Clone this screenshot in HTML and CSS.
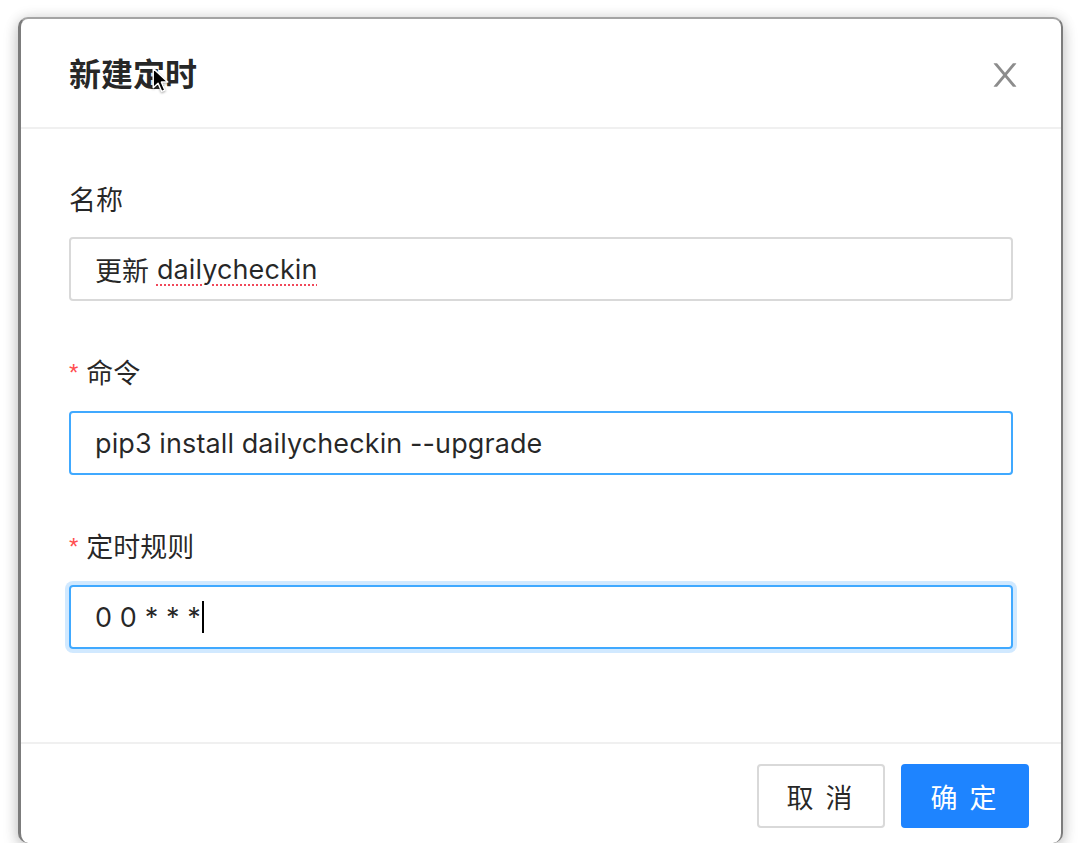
FILE: index.html
```html
<!DOCTYPE html>
<html lang="zh-CN">
<head>
<meta charset="utf-8">
<title>新建定时</title>
<link rel="stylesheet" href="styles.css">
</head>
<body>
<div class="page">
  <div class="modal">
    <div class="modal-header">
      <div class="modal-title">新建定时</div>
      <button class="modal-close" aria-label="关闭">
        <svg viewBox="64 64 896 896" width="32" height="32" fill="currentColor"><path d="M563.8 512l262.5-312.9c4.4-5.2.7-13.1-6.1-13.1h-79.8c-4.7 0-9.2 2.1-12.3 5.7L511.6 449.8 295.1 191.7c-3-3.6-7.5-5.7-12.3-5.7H203c-6.8 0-10.5 7.9-6.1 13.1L459.4 512 196.9 824.9A7.95 7.95 0 00203 838h79.8c4.7 0 9.2-2.1 12.3-5.7l216.5-258.1 216.5 258.1c3 3.6 7.5 5.7 12.3 5.7h79.8c6.8 0 10.5-7.9 6.1-13.1L563.8 512z"/></svg>
      </button>
      <svg class="mouse" viewBox="0 0 14 22" width="17" height="27"><path d="M1 1 L1 17 L5 13.2 L8 20 L10.6 18.9 L7.7 12.3 L13 12.3 Z" fill="#000" stroke="#fff" stroke-width="1.2" stroke-linejoin="round"/></svg>
    </div>
    <div class="modal-body">
      <div class="form-item">
        <div class="label">名称</div>
        <div class="input"><span>更新 </span><span class="spell">dailycheckin</span></div>
      </div>
      <div class="form-item">
        <div class="label"><span class="req">*</span>命令</div>
        <div class="input hover">pip3 install dailycheckin --upgrade</div>
      </div>
      <div class="form-item last">
        <div class="label"><span class="req">*</span>定时规则</div>
        <div class="input focus">0 0 * * *<span class="caret"></span></div>
      </div>
    </div>
    <div class="modal-footer">
      <button class="btn">取 消</button>
      <button class="btn primary">确 定</button>
    </div>
  </div>
</div>
</body>
</html>
```

FILE: styles.css
```css
html, body {
  margin: 0;
  background: #fff;
}
body {
  font-family: Inter, "Noto Sans CJK SC", sans-serif;
  color: rgba(0, 0, 0, 0.85);
}
.page {
  padding: 17px 0 0 18px;
}
.modal {
  width: 1040px;
  background: #fff;
  border-left: 3px solid #7c7c7c;
  border-right: 2px solid #7c7c7c;
  border-top: 2px solid #a4a4a4;
  border-radius: 10px;
  box-shadow: 0 6px 16px rgba(0, 0, 0, 0.18), 0 0 14px rgba(0, 0, 0, 0.12);
  position: relative;
}
.modal-header {
  height: 108px;
  padding: 0 48px;
  display: flex;
  align-items: center;
  border-bottom: 2px solid #f0f0f0;
  position: relative;
}
.modal-title {
  font-family: "Noto Sans CJK SC", sans-serif;
  font-size: 32px;
  font-weight: 700;
  line-height: 44px;
  color: rgba(0, 0, 0, 0.85);
  margin-top: -2px;
}
.modal-close {
  position: absolute;
  top: 0;
  right: 0;
  width: 112px;
  height: 112px;
  border: 0;
  background: transparent;
  padding: 0;
  display: flex;
  align-items: center;
  justify-content: center;
  color: rgba(0, 0, 0, 0.45);
}
.mouse {
  position: absolute;
  left: 131px;
  top: 48px;
  filter: drop-shadow(0 1px 1px rgba(0,0,0,.35));
}
.modal-body {
  padding: 48px;
}
.form-item {
  margin-bottom: 48px;
}
.form-item.last {
  margin-bottom: 45px;
}
.label {
  font-size: 27px;
  line-height: 44px;
  margin-bottom: 16px;
  display: flex;
  align-items: center;
  font-family: "Noto Sans CJK SC", sans-serif;
}
.req {
  color: #ff4d4f;
  font-family: "Liberation Sans", sans-serif;
  font-size: 24px;
  margin-right: 8px;
  margin-top: 2px;
}
.input {
  height: 64px;
  box-sizing: border-box;
  border: 2px solid #d9d9d9;
  border-radius: 4px;
  padding: 0 22px 0 24px;
  display: flex;
  align-items: center;
  font-size: 27px;
  letter-spacing: 0.1px;
  color: rgba(0, 0, 0, 0.85);
  white-space: pre;
}
.spell {
  text-decoration: underline dotted #f0485a;
  text-decoration-thickness: 2px;
  text-underline-offset: 6px;
}
.input.hover {
  border-color: #40a9ff;
}
.input.focus {
  border-color: #40a9ff;
  box-shadow: 0 0 0 4px rgba(24, 144, 255, 0.2);
}
.caret {
  display: inline-block;
  width: 2px;
  height: 32px;
  background: #000;
  margin-left: 1px;
}
.modal-footer {
  border-top: 2px solid #f0f0f0;
  padding: 20px 32px 15px;
  display: flex;
  justify-content: flex-end;
  gap: 16px;
}
.btn {
  width: 128px;
  height: 64px;
  box-sizing: border-box;
  border: 2px solid #d9d9d9;
  border-radius: 4px;
  background: #fff;
  font-family: "Noto Sans CJK SC", sans-serif;
  font-size: 27px;
  letter-spacing: 3px;
  color: rgba(0, 0, 0, 0.85);
  padding: 0;
}
.btn.primary {
  background: #1e84ff;
  border-color: #1e84ff;
  color: #fff;
}
```
